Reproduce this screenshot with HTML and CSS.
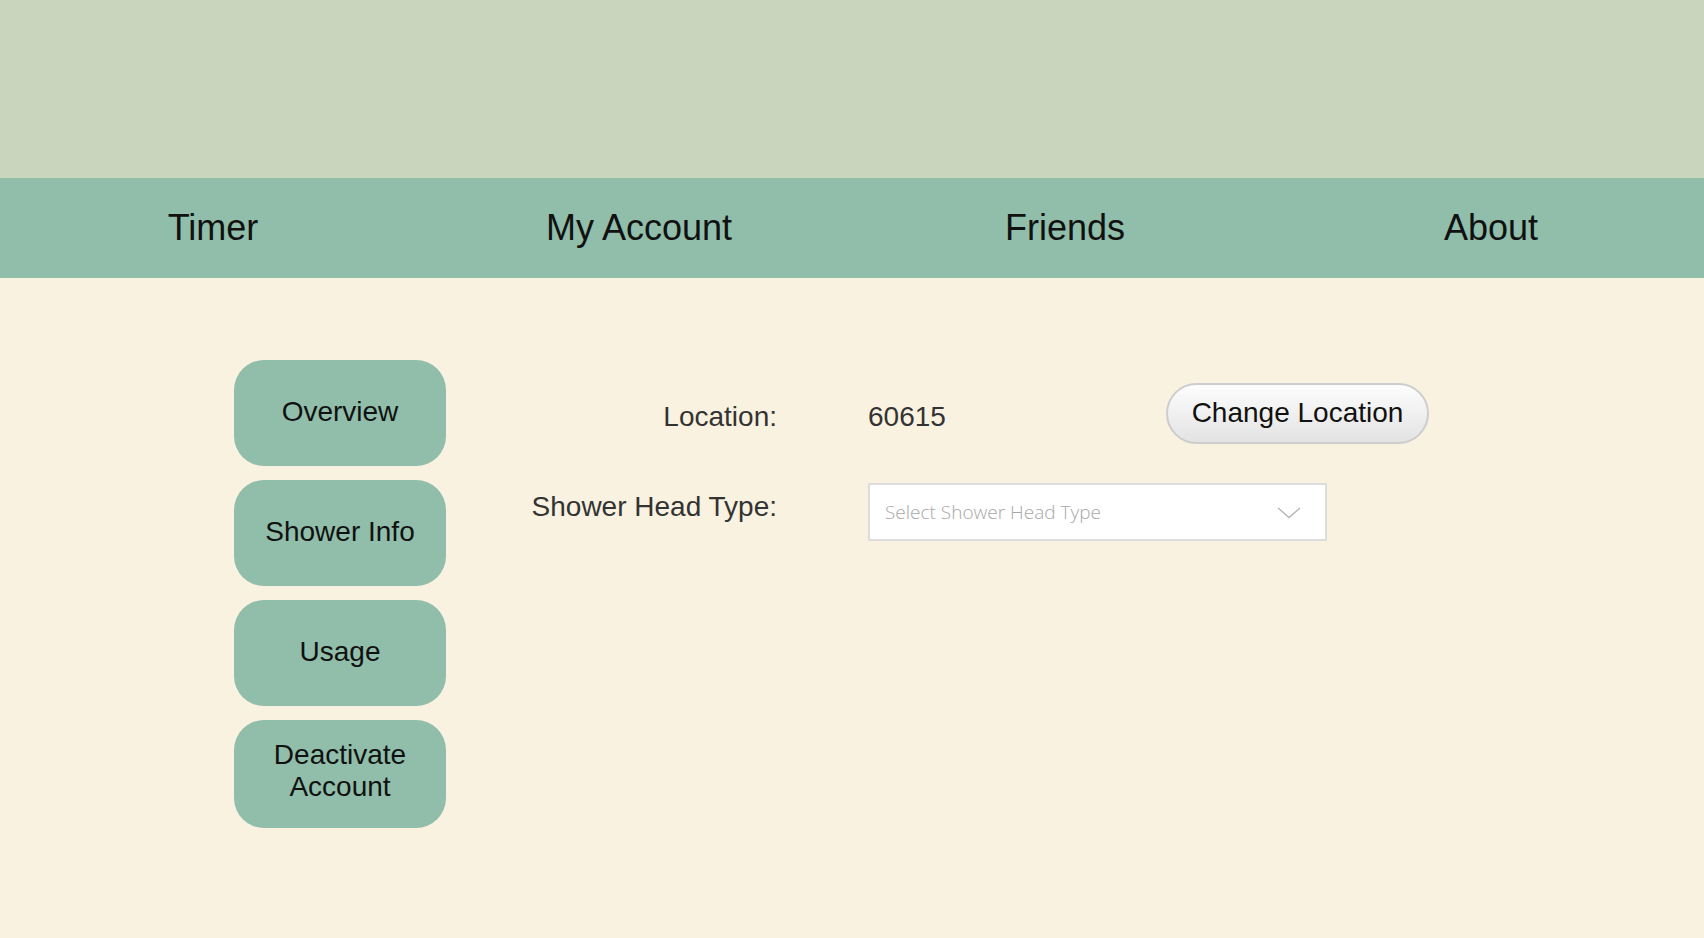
FILE: index.html
```html
<!DOCTYPE html>
<html lang="en">
<head>
<meta charset="utf-8">
<title>My Account</title>
<link rel="stylesheet" href="styles.css">
</head>
<body>
<header class="banner"></header>
<nav class="nav">
  <a class="nav-item" href="#">Timer</a>
  <a class="nav-item" href="#">My Account</a>
  <a class="nav-item" href="#">Friends</a>
  <a class="nav-item" href="#">About</a>
</nav>
<main class="main">
  <aside class="sidebar">
    <a class="side-btn" href="#">Overview</a>
    <a class="side-btn" href="#">Shower Info</a>
    <a class="side-btn" href="#">Usage</a>
    <a class="side-btn side-btn--tall" href="#">Deactivate<br>Account</a>
  </aside>
  <section class="form">
    <div class="label label--loc">Location:</div>
    <div class="value-row">
      <span class="zip">60615</span>
      <button class="pill" type="button">Change Location</button>
    </div>
    <div class="label label--head">Shower Head Type:</div>
    <div class="select">
      <span class="select-text">Select Shower Head Type</span>
      <svg class="chevron" width="24" height="12" viewBox="0 0 24 12"><path d="M1 1 L12 10.5 L23 1" fill="none" stroke="#b5b5b5" stroke-width="1.4"/></svg>
    </div>
  </section>
</main>
</body>
</html>
```
FILE: styles.css
```css
html, body {
  margin: 0;
  padding: 0;
  background: #faf2e0;
  min-height: 100vh;
}
body {
  font-family: "Liberation Sans", Arial, sans-serif;
  color: #111;
}
.banner {
  height: 178px;
  background: #c9d5bd;
}
.nav {
  height: 100px;
  background: #90beaa;
  display: grid;
  grid-template-columns: repeat(4, 1fr);
  align-items: center;
}
.nav-item {
  text-align: center;
  font-size: 36px;
  color: #111;
  text-decoration: none;
  line-height: 40px;
}
.main {
  display: flex;
  padding: 82px 0 0 234px;
}
.sidebar {
  width: 212px;
  display: flex;
  flex-direction: column;
  gap: 14px;
}
.side-btn {
  height: 106px;
  border-radius: 30px;
  background: #90beaa;
  color: #111;
  text-decoration: none;
  font-size: 28px;
  line-height: 32px;
  display: flex;
  align-items: center;
  justify-content: center;
  text-align: center;
  padding-bottom: 2px;
  box-sizing: border-box;
}
.side-btn--tall {
  height: 108px;
  padding-bottom: 6px;
}
.form {
  margin-top: 23px;
  display: grid;
  grid-template-columns: 331px max-content;
  column-gap: 91px;
  row-gap: 39px;
  align-items: start;
  align-content: start;
}
.label {
  text-align: right;
  font-size: 28px;
  line-height: 32px;
  color: #333;
}
.label--loc {
  padding-top: 18px;
}
.label--head {
  padding-top: 8px;
}
.value-row {
  display: flex;
  align-items: flex-start;
}
.zip {
  width: 298px;
  font-size: 28px;
  line-height: 32px;
  color: #333;
  padding-top: 18px;
}
.pill {
  width: 263px;
  height: 61px;
  border: 2px solid #cdcdcd;
  border-radius: 31px;
  background: linear-gradient(#fdfdfd, #e3e3e3);
  font-family: "Liberation Sans", Arial, sans-serif;
  font-size: 28px;
  line-height: 32px;
  color: #111;
  padding: 0 0 2px 0;
  box-sizing: border-box;
}
.select {
  width: 459px;
  height: 58px;
  box-sizing: border-box;
  border: 2px solid #dcdcdc;
  background: #fff;
  display: flex;
  align-items: center;
  justify-content: space-between;
  padding: 0 24px 0 15px;
}
.select-text {
  font-family: "Open Sans", "Liberation Sans", sans-serif;
  font-weight: 300;
  font-size: 19px;
  color: #a8a8a8;
}
.chevron {
  display: block;
  margin-top: 2px;
}
```
